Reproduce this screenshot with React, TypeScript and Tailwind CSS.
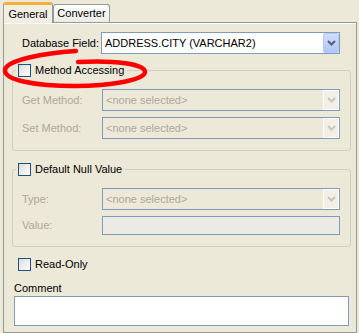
import React from "react";

function Arrow({ disabled }: { disabled?: boolean }) {
  return (
    <svg width="9" height="6" viewBox="0 0 9 6">
      <polyline
        points="1,1 4.5,4.5 8,1"
        fill="none"
        stroke={disabled ? "#c9c7ba" : "#4d6185"}
        strokeWidth="2"
      />
    </svg>
  );
}

function Combo({ text, disabled, className }: { text: string; disabled?: boolean; className: string }) {
  return (
    <div
      className={
        "flex h-[22px] border border-[#7f9db9] " +
        (disabled ? "bg-[#ece9d8] " : "bg-white ") +
        className
      }
    >
      <div
        className={
          "flex-1 flex items-center pl-[3px] whitespace-nowrap overflow-hidden " +
          (disabled ? "text-[#aca899]" : "text-black")
        }
      >
        {text}
      </div>
      {disabled ? (
        <div className="w-[16px] h-[20px] border border-white bg-[#f1efe6] flex items-center justify-center">
          <Arrow disabled />
        </div>
      ) : (
        <div className="w-[16px] h-[20px] rounded-[2px] border border-[#b6c8f5] bg-gradient-to-b from-[#d2ddfb] to-[#b1c5f6] flex items-center justify-center">
          <Arrow />
        </div>
      )}
    </div>
  );
}

function Check({ label, disabled }: { label: string; disabled?: boolean }) {
  return (
    <div className="flex items-center h-[13px]">
      <div className="w-[13px] h-[13px] border border-[#1c5180] bg-gradient-to-br from-[#dcdcd7] to-white" />
      <span className={"ml-[4px] leading-[13px] " + (disabled ? "text-[#aca899]" : "text-black")}>{label}</span>
    </div>
  );
}

export default function App() {
  return (
    <div className="relative w-[359px] h-[333px] bg-[#ece9d8] pt-[2px] font-['Tahoma','Liberation_Sans',sans-serif] text-[11px] text-black overflow-hidden">
      {/* tabs */}
      <div className="flex items-start h-[20px] pl-[3px]">
        <div className="relative z-10 w-[50px] h-[21px] border-x border-[#919b9c] border-t-[3px] border-t-[#f5b13a] rounded-t-[3px] bg-[#f1efe4] flex items-start justify-center pt-[3px] leading-[13px]">
          General
        </div>
        <div className="mt-[2px] w-[57px] h-[18px] border-x border-t border-[#919b9c] rounded-t-[3px] bg-gradient-to-b from-white to-[#ecebe5] flex items-start justify-center pt-[2px] leading-[13px]">
          Converter
        </div>
      </div>
      {/* panel */}
      <div className="ml-[3px] w-[354px] h-[311px] border border-[#919b9c] shadow-[inset_0_1px_0_#fcfcfe]">
        <div className="pt-[9px] pl-[18px] flex items-center">
          <div className="w-[79px] leading-[13px]">Database Field:</div>
          <Combo text="ADDRESS.CITY (VARCHAR2)" className="w-[239px]" />
        </div>

        <fieldset className="mt-[10px] ml-[8px] w-[339px] border border-[#d0d0bf] rounded-[3px] pl-[3px] pr-[3px] pt-[12px] pb-[11px] min-w-0">
          <legend className="pl-[2px] pr-[3px]">
            <Check label="Method Accessing" />
          </legend>
          <div className="flex items-center pl-[6px]">
            <div className="w-[80px] text-[#aca899] leading-[13px]">Get Method:</div>
            <Combo text="<none selected>" disabled className="w-[238px]" />
          </div>
          <div className="flex items-center pl-[6px] mt-[6px]">
            <div className="w-[80px] text-[#aca899] leading-[13px]">Set Method:</div>
            <Combo text="<none selected>" disabled className="w-[238px]" />
          </div>
        </fieldset>

        <fieldset className="mt-[12px] ml-[8px] w-[339px] border border-[#d0d0bf] rounded-[3px] pl-[3px] pr-[3px] pt-[12px] pb-[11px] min-w-0">
          <legend className="pl-[2px] pr-[3px]">
            <Check label="Default Null Value" />
          </legend>
          <div className="flex items-center pl-[6px]">
            <div className="w-[80px] text-[#aca899] leading-[13px]">Type:</div>
            <Combo text="<none selected>" disabled className="w-[238px]" />
          </div>
          <div className="flex items-center pl-[6px] mt-[6px]">
            <div className="w-[80px] text-[#aca899] leading-[13px]">Value:</div>
            <div className="w-[238px] h-[19px] border border-[#7f9db9] bg-[#ebeae4]" />
          </div>
        </fieldset>

        <div className="mt-[11px] pl-[14px]">
          <Check label="Read-Only" />
        </div>

        <div className="mt-[11px] pl-[10px] leading-[13px]">Comment</div>
        <div className="mt-[1px] ml-[10px] w-[335px] h-[30px] border border-[#7f9db9] bg-white" />
      </div>

      {/* red hand-drawn ellipse annotation */}
      <svg
        className="absolute left-0 top-0 pointer-events-none z-20"
        width="359"
        height="333"
        viewBox="0 0 359 333"
      >
        <path
          d="M76,51 C45,53 6,60 5,70 C4,80 35,86 75,86 C110,86 145,80 145,72 C145,64 115,60 78,62"
          fill="none"
          stroke="#ff0000"
          strokeWidth="4.5"
          strokeLinecap="round"
        />
      </svg>
    </div>
  );
}
